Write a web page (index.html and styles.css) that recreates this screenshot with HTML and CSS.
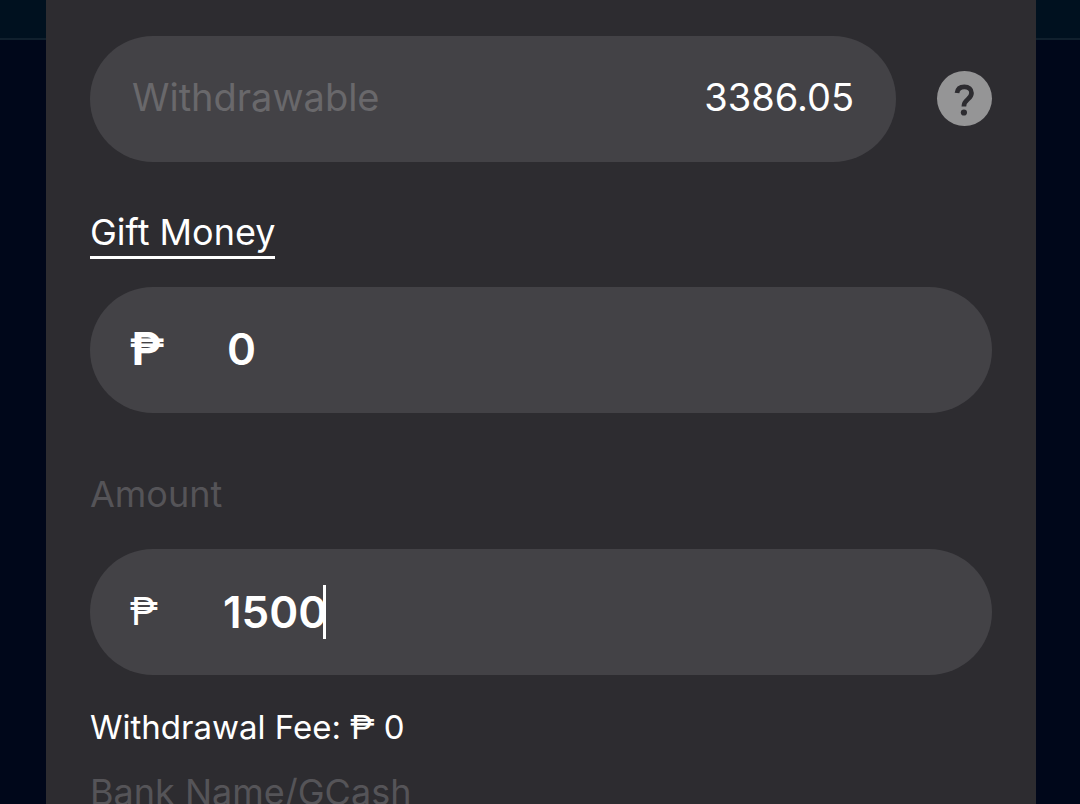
FILE: index.html
```html
<!DOCTYPE html>
<html lang="en">
<head>
    <meta charset="UTF-8">
    <meta name="viewport" content="width=device-width, initial-scale=1.0">
    <title>Withdraw</title>
    <link rel="stylesheet" href="styles.css">
</head>
<body>
    <div class="topbar"></div>
    <form class="panel">
        <div class="balance-row">
            <div class="field balance">
                <label for="withdrawable">Withdrawable</label>
                <output id="withdrawable">3386.05</output>
            </div>
            <button type="button" class="help" aria-label="Help">
                <svg viewBox="0 0 56 56">
                    <circle cx="28.500" cy="27.500" r="27.5" fill="#959596"/>
                    <path d="M21 22C21.500 18 24.200 15.800 28.300 15.800c4.400 0 7.200 2.400 7.200 6.100 0 3-1.600 4.700-3.900 6.600-2.500 2-3.700 3.400-3.700 7" fill="none" stroke="#2d2c30" stroke-width="4.700"/>
                    <circle cx="27.900" cy="41.500" r="3.100" fill="#2d2c30"/>
                </svg>
            </button>
        </div>

        <a href="#" class="gift-link">Gift Money</a>
        <div class="field gift">
            <span class="peso bold">₱</span>
            <input type="text" aria-label="Gift Money" value="0" inputmode="numeric">
        </div>

        <label class="muted amount-label" for="amount">Amount</label>
        <div class="field amount">
            <span class="peso">₱</span>
            <input type="text" id="amount" value="1500" inputmode="numeric">
            <span class="caret"></span>
        </div>

        <p class="fee">Withdrawal Fee: <span class="currency">₱</span> 0</p>
        <div class="muted bank-label">Bank Name/GCash</div>
    </form>
</body>
</html>
```
FILE: styles.css
```css
* {
    box-sizing: border-box;
}
body {
    height: 100vh;
    margin: 0;
    overflow: hidden;
    position: relative;
    background: #00071a;
    color: #fff;
    font-family: Inter, sans-serif;
}
.topbar {
    position: absolute;
    top: 0;
    left: 0;
    right: 0;
    height: 40px;
    background: #00111f;
    border-bottom: 2px solid #10202d;
}
.panel {
    position: relative;
    min-height: 100vh;
    margin: 0 44px 0 46px;
    padding: 36px 44px 0;
    background: #2d2c30;
}
.balance-row {
    display: flex;
    align-items: center;
    gap: 40px;
}
.field {
    display: flex;
    align-items: center;
    height: 126px;
    padding: 0 40px 2px;
    border-radius: 64px;
    background: #434246;
}
.balance {
    flex: 1;
    justify-content: space-between;
    padding: 0 42px 4px;
    font-size: 38px;
}
.balance label {
    color: #69686b;
}
.help {
    width: 56px;
    height: 56px;
    padding: 0;
    border: 0;
    background: none;
}
.help svg {
    display: block;
    overflow: visible;
}
.gift-link {
    display: block;
    width: fit-content;
    margin: 46px 0 28px;
    border-bottom: 3px solid #fff;
    color: #fff;
    font-size: 36px;
    line-height: 48px;
    text-decoration: none;
}
.peso {
    width: 93px;
    font-size: 38px;
}
.peso, .currency {
    font-family: Roboto, sans-serif;
}
.bold {
    font-size: 46px;
    font-weight: 700;
}
.field input {
    padding: 0;
    border: 0;
    outline: 0;
    background: none;
    color: #fff;
    font: 600 44px Inter, sans-serif;
}
.gift input {
    flex: 1;
    margin-left: 4px;
}
.amount {
    padding-bottom: 0;
}
.amount input {
    field-sizing: content;
}
.caret {
    width: 3px;
    height: 54px;
    margin-left: -4px;
    background: #fff;
}
.muted {
    display: block;
    color: #555458;
    font-size: 36px;
    line-height: 46px;
}
.amount-label {
    margin: 58px 0 32px;
}
.fee {
    margin: 31px 0 20px;
    font-size: 33px;
    line-height: 42px;
}
```
